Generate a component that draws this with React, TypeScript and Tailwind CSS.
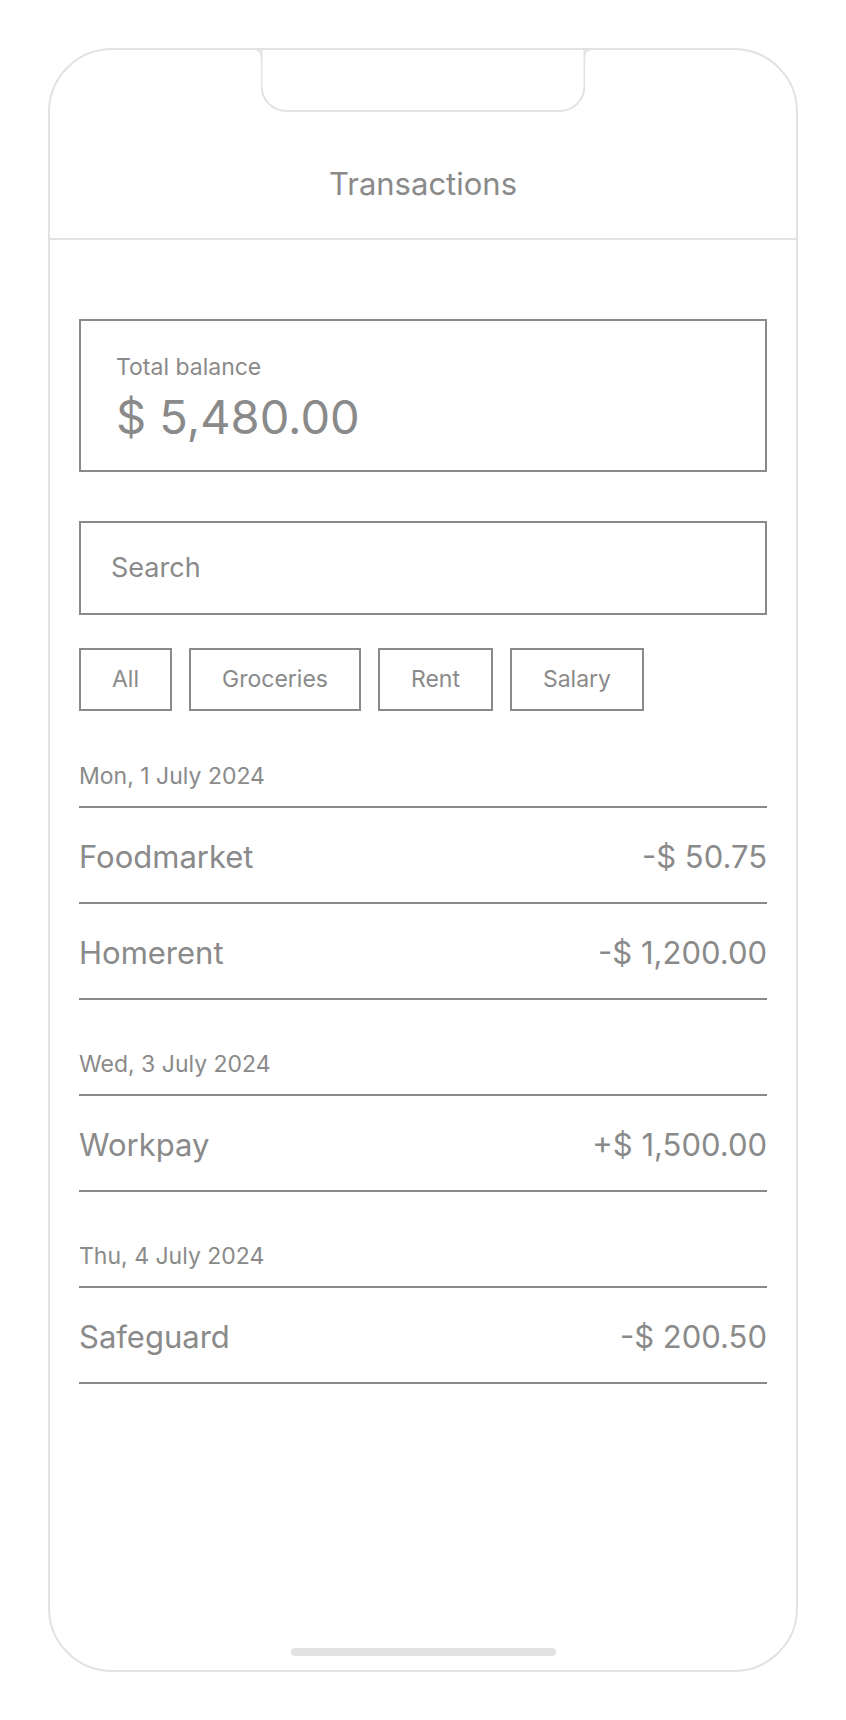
import React from "react";

// One day of transactions
interface Group {
  date: string;
  items: Array<{ name: string; amount: string }>;
}

const GROUPS: Array<Group> = [
  {
    date: "Mon, 1 July 2024",
    items: [
      { name: "Foodmarket", amount: "-$ 50.75" },
      { name: "Homerent", amount: "-$ 1,200.00" },
    ],
  },
  {
    date: "Wed, 3 July 2024",
    items: [{ name: "Workpay", amount: "+$ 1,500.00" }],
  },
  {
    date: "Thu, 4 July 2024",
    items: [{ name: "Safeguard", amount: "-$ 200.50" }],
  },
];

const FILTERS = ["All", "Groceries", "Rent", "Salary"];

export default function App() {
  return (
    <div className="min-h-[1720px] bg-white pt-12 font-['Inter',sans-serif] text-[#8a8a8a]">
      {/* Phone frame */}
      <div className="relative mx-auto flex h-[1624px] w-[750px] flex-col rounded-[64px] border-2 border-[#e2e2e2]">
        {/* Notch */}
        <div className="absolute left-1/2 top-0 h-[62px] w-[325px] -translate-x-1/2 rounded-b-[26px] border-2 border-t-0 border-[#e2e2e2]">
          <div className="absolute -left-[10px] -top-[2px] h-[10px] w-[10px] rounded-tr-[8px] border-r-2 border-t-2 border-[#e2e2e2]" />
          <div className="absolute -right-[10px] -top-[2px] h-[10px] w-[10px] rounded-tl-[8px] border-l-2 border-t-2 border-[#e2e2e2]" />
        </div>

        {/* Header */}
        <div className="flex h-[190px] items-end justify-center border-b-2 border-[#e2e2e2] pb-[38px]">
          <h1 className="text-[31px] leading-[32px]">Transactions</h1>
        </div>

        <div className="px-[29px] pt-[79px]">
          {/* Balance */}
          <div className="h-[153px] border-2 border-[#8a8a8a] pl-[35px] pt-[32px]">
            <div className="text-[23px] leading-[28px]">Total balance</div>
            <div className="mt-[10px] text-[47px] leading-[52px]">$ 5,480.00</div>
          </div>

          {/* Search */}
          <div className="mt-[49px] flex h-[94px] items-center border-2 border-[#8a8a8a] pl-[30px] text-[27px]">
            Search
          </div>

          {/* Filters */}
          <div className="mt-[33px] flex gap-[17px]">
            {FILTERS.map((f) => (
              <div key={f} className="flex h-[63px] items-center border-2 border-[#8a8a8a] px-[31px] text-[23px]">
                {f}
              </div>
            ))}
          </div>

          {/* Transactions list */}
          {GROUPS.map((g, idx) => (
            <div key={idx} className={idx === 0 ? "mt-[51px]" : "mt-[50px]"}>
              <div className="border-b-2 border-[#8a8a8a] pb-[16px] text-[23px] leading-[28px]">{g.date}</div>
              {g.items.map((t) => (
                <div key={t.name} className="flex h-[96px] items-center justify-between border-b-2 border-[#8a8a8a] pt-[4px] text-[31px]">
                  <span>{t.name}</span>
                  <span>{t.amount}</span>
                </div>
              ))}
            </div>
          ))}
        </div>

        {/* Home indicator */}
        <div className="mx-auto mb-[14px] mt-auto h-[8px] w-[265px] rounded-full bg-[#e2e2e2]" />
      </div>
    </div>
  );
}
